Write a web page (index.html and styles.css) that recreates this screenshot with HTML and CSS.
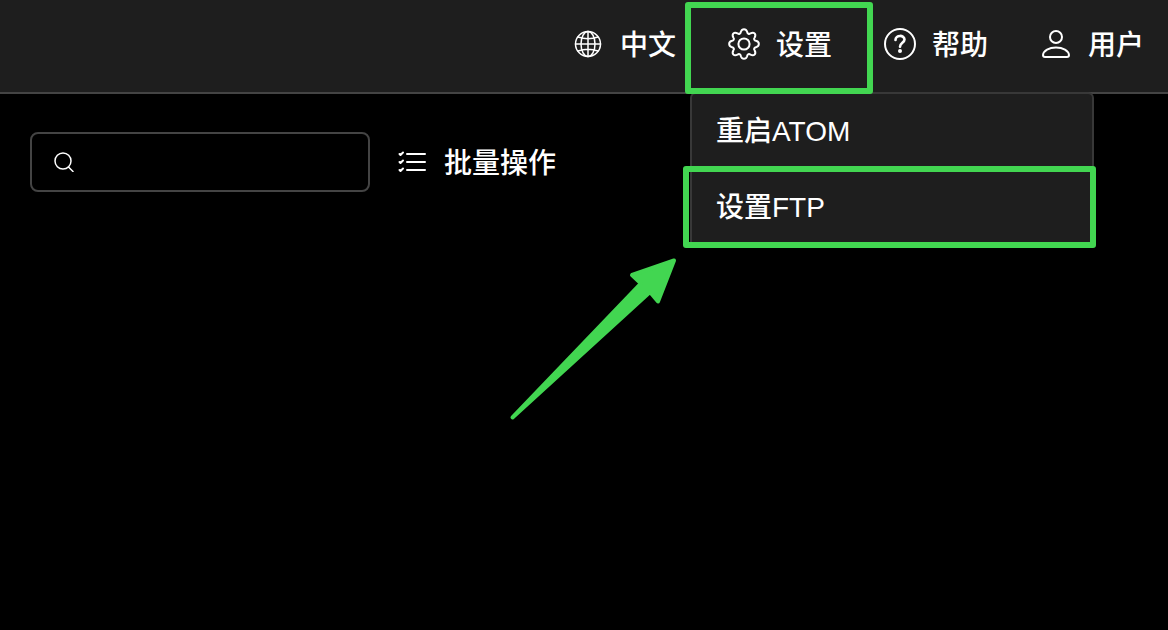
FILE: index.html
```
<!DOCTYPE html>
<html lang="zh-CN">
<head>
    <meta charset="UTF-8">
    <title>ATOM</title>
    <link rel="stylesheet" href="styles.css">
</head>
<body>

<header class="header">
    <nav class="nav">
        <button type="button" class="nav-item">
            <svg class="icon" viewBox="0 0 32 32">
                <circle cx="16" cy="16" r="12.5"/>
                <ellipse cx="16" cy="16" rx="7" ry="12.5"/>
                <path d="M16 3.5v25M3.5 16h25M6 9q10 3.5 20 0M6 23q10-3.5 20 0"/>
            </svg>
            <span class="label">中文</span>
        </button>
        <div class="nav-group">
            <button type="button" class="nav-item" aria-expanded="true">
                <svg class="icon icon-bold" viewBox="0 0 32 32">
                    <path d="M13 3.500C14 .4 18 .4 19 3.500C19.600 6 21 6.500 22.500 5.300C26 3.500 28.500 6 26.700 9.500C25.500 11 26 12.400 28.500 13C31.600 14 31.600 18 28.500 19C26 19.600 25.500 21 26.700 22.500C28.500 26 26 28.500 22.500 26.700C21 25.500 19.600 26 19 28.500C18 31.600 14 31.600 13 28.500C12.400 26 11 25.500 9.500 26.700C6 28.500 3.500 26 5.300 22.500C6.500 21 6 19.600 3.500 19C.4 18 .4 14 3.500 13C6 12.400 6.500 11 5.300 9.500C3.500 6 6 3.500 9.500 5.300C11 6.500 12.400 6 13 3.500Z"/>
                    <circle cx="16" cy="16" r="5.6"/>
                </svg>
                <span class="label">设置</span>
            </button>
            <div class="menu">
                <button type="button" class="menu-item">重启ATOM</button>
                <button type="button" class="menu-item">设置FTP</button>
                <div class="mark mark-menu"></div>
                <svg class="arrow" viewBox="0 0 190 180">
                    <path d="M12.5 167.5L141 33.500L132 25L174 10.500L158 51.500L150 42Z"/>
                </svg>
            </div>
            <div class="mark mark-nav"></div>
        </div>
        <button type="button" class="nav-item">
            <svg class="icon icon-bold" viewBox="0 0 32 32">
                <circle cx="16" cy="16" r="15"/>
                <path class="hook" d="M11.500 12C11.500 6.500 20.500 6.800 20.500 11.500C20.500 14.800 16 15 16 18.800"/>
                <circle class="dot" cx="16" cy="23" r="2"/>
            </svg>
            <span class="label">帮助</span>
        </button>
        <button type="button" class="nav-item">
            <svg class="icon icon-bold" viewBox="0 0 32 32">
                <circle cx="16" cy="9" r="6"/>
                <path d="M5 29C3.500 29 3 28.300 3 27C3.500 22.500 9 19.500 16 19.500S28.500 22.500 29 27C29 28.300 28.500 29 27 29Z"/>
            </svg>
            <span class="label">用户</span>
        </button>
    </nav>
</header>

<main class="toolbar">
    <label class="search">
        <svg class="search-icon" viewBox="0 0 20 20">
            <circle cx="9" cy="9" r="8"/>
            <path d="M14.500 15L19 19.500"/>
        </svg>
        <input type="search" class="search-input" aria-label="搜索">
    </label>
    <button type="button" class="batch">
        <svg class="batch-icon" viewBox="0 0 28 24">
            <path d="M9 4h18M9 12h18M9 20h18"/>
            <path d="M1.500 4L2.500 5L5 2.500M1.500 12L2.500 13L5 10.500M1.500 20L2.500 21L5 18.500"/>
        </svg>
        <span class="label">批量操作</span>
    </button>
</main>

</body>
</html>
```
FILE: styles.css
```
* {
    box-sizing: border-box;
}
body {
    margin: 0;
    min-height: 100vh;
    background-color: #000;
    color: #fff;
    font-family: "Liberation Sans", "Noto Sans CJK SC", sans-serif;
    font-size: 28px;
    font-weight: 500;
}
button {
    padding: 0;
    border: 0;
    background: none;
    color: inherit;
    font: inherit;
    line-height: 40px;
    cursor: pointer;
}
svg {
    flex: none;
    fill: none;
    stroke: #fff;
    stroke-width: 1.5;
    stroke-linecap: round;
    stroke-linejoin: round;
}
.header {
    background-color: #1e1e1e;
    border-bottom: 2px solid #444;
}
.nav {
    display: flex;
    justify-content: flex-end;
    gap: 52px;
    padding-right: 24px;
}
.nav-group {
    position: relative;
}
.nav-item {
    display: flex;
    align-items: center;
    gap: 16px;
    padding: 22px 0 26px;
    white-space: nowrap;
}
.label {
    padding-top: 4px;
}
.icon {
    width: 32px;
    height: 32px;
}
.icon-bold {
    stroke-width: 2;
}
.hook {
    stroke-width: 2.6;
}
.dot {
    fill: #fff;
    stroke: none;
}

/* settings dropdown */
.menu {
    position: absolute;
    top: 92px;
    left: -38px;
    width: 404px;
    border: 2px solid #383838;
    border-radius: 6px;
    background-color: #1e1e1e;
}
.menu-item {
    display: block;
    width: 100%;
    padding: 18px 24px;
    text-align: left;
}

/* green guide marks */
.mark {
    position: absolute;
    border: 6px solid #42d651;
    border-radius: 3px;
    pointer-events: none;
}
.mark-nav {
    top: 2px;
    right: -41px;
    bottom: -2px;
    left: -43px;
}
.mark-menu {
    top: 72px;
    right: -4px;
    bottom: -2px;
    left: -9px;
}
.arrow {
    position: absolute;
    top: 156px;
    left: -192px;
    width: 190px;
    height: 180px;
    fill: #42d651;
    stroke: #42d651;
    stroke-width: 4;
    pointer-events: none;
}

.toolbar {
    display: flex;
    align-items: center;
    gap: 28px;
    padding: 38px 30px;
}
.search {
    display: flex;
    align-items: center;
    gap: 12px;
    width: 340px;
    height: 60px;
    padding: 0 22px;
    border: 2px solid #444;
    border-radius: 8px;
}
.search-icon {
    width: 20px;
    height: 20px;
}
.search-input {
    flex: 1;
    min-width: 0;
    border: 0;
    outline: 0;
    background: none;
    color: inherit;
    font: inherit;
}
.batch {
    display: flex;
    align-items: center;
    gap: 18px;
}
.batch-icon {
    width: 28px;
    height: 24px;
    stroke-width: 2;
}
```
